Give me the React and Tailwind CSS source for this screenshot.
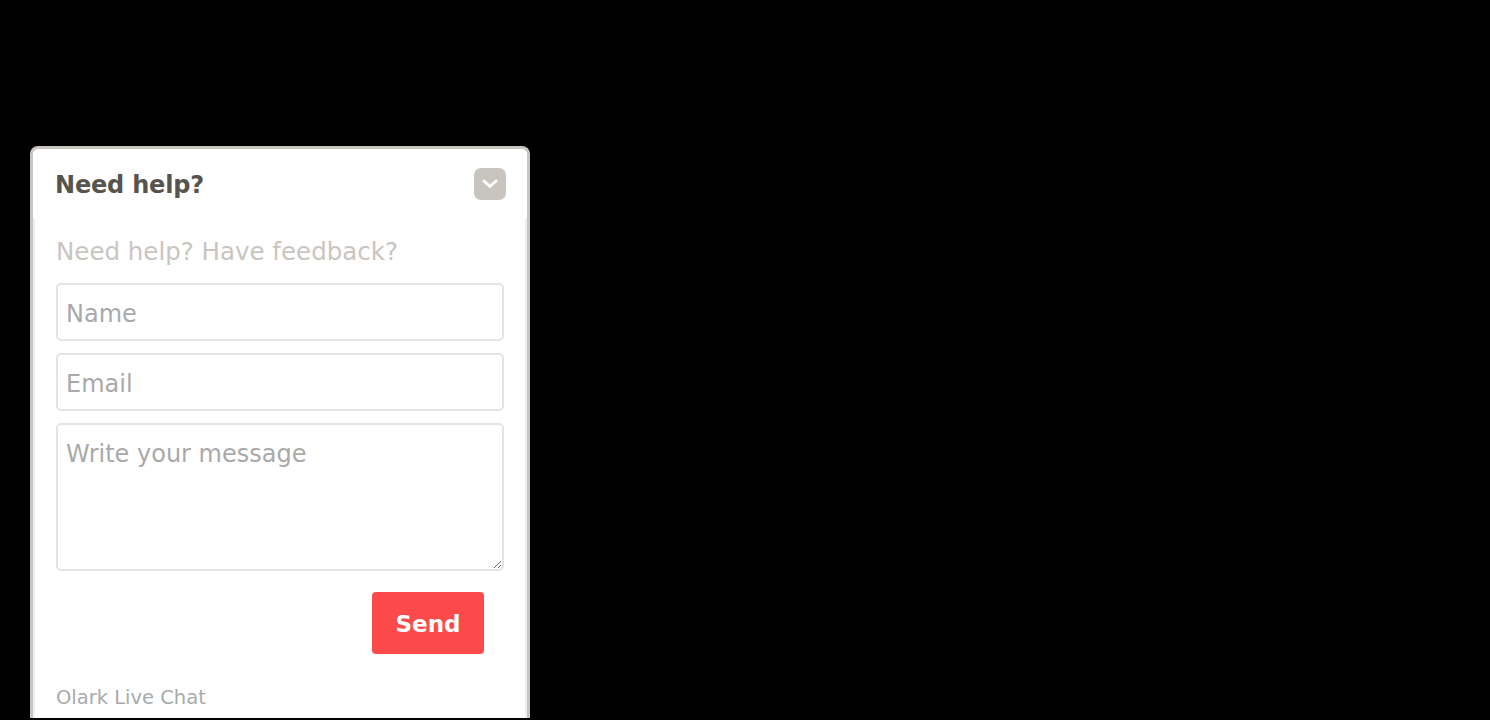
import React from 'react';

const font = { fontFamily: '"DejaVu Sans", "Open Sans", sans-serif' };

export default function App() {
  return (
    <div className="h-[720px] w-[1490px] overflow-hidden bg-black pl-[30px] pt-[146px]" style={font}>
      <div className="w-[500px] rounded-t-[8px] border-[3px] border-b-0 border-[#c9c6c1] bg-white">
        <header className="flex h-[69px] items-center justify-between pl-[22px] pr-[21px]">
          <h1 className="pt-[2px] text-[24px] font-bold tracking-[-0.2px] text-[#57534e]">Need help?</h1>
          <button className="flex h-[32px] w-[32px] items-center justify-center rounded-[7px] bg-[#c8c4be]">
            <svg width="16" height="10" viewBox="0 0 16 10" fill="none">
              <path d="M2 2l6 5.5L14 2" stroke="white" strokeWidth="3" strokeLinecap="round" strokeLinejoin="round" />
            </svg>
          </button>
        </header>

        <div className="h-[500px] border-x-2 border-[#efefef] px-[21px] pt-[19px]">
          <p className="text-[24.5px] leading-[30px] text-[#c9c5bf]">Need help? Have feedback?</p>

          <form className="mt-[16px] flex flex-col gap-[12px]">
            <input
              placeholder="Name"
              className="h-[58px] w-full rounded-[5px] border-2 border-[#e4e4e4] px-[8px] pt-[3px] text-[24px] outline-none placeholder:text-[#a9a9a9]"
            />
            <input
              placeholder="Email"
              className="h-[58px] w-full rounded-[5px] border-2 border-[#e4e4e4] px-[8px] pt-[3px] text-[24px] outline-none placeholder:text-[#a9a9a9]"
            />
            <textarea
              placeholder="Write your message"
              className="h-[148px] w-full rounded-[5px] border-2 border-[#e4e4e4] px-[8px] pt-[14px] text-[24px] leading-[30px] outline-none placeholder:text-[#a9a9a9]"
            />
            <div className="mt-[9px] flex justify-end pr-[20px]">
              <button type="button" className="h-[62px] w-[112px] rounded-[4px] bg-[#fc4a4a] pt-[2px] text-[23px] font-bold text-white">
                Send
              </button>
            </div>
          </form>

          <div className="mt-[31px] text-[19.5px] leading-[26px] text-[#a6abab]">Olark Live Chat</div>
        </div>
      </div>
    </div>
  );
}
